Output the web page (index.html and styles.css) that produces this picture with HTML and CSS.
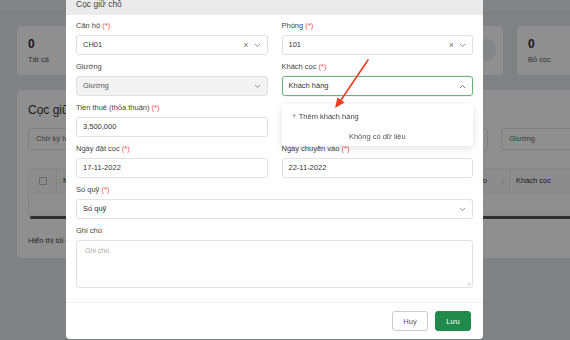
FILE: index.html
```html
<!DOCTYPE html>
<html lang="vi">
  <head>
    <meta charset="UTF-8" />
    <meta name="viewport" content="width=device-width, initial-scale=1.0" />
    <title>Cọc giữ chỗ</title>
    <link rel="stylesheet" href="styles.css">
  </head>
  <body>
    <div class="page">
      <div class="topbar"></div>
      <div class="stats">
        <div class="stat"><b>0</b><span>Tất cả</span></div>
        <div class="stat"><b>0</b><span>Chờ ký</span></div>
        <div class="stat"><b>0</b><span>Đã ký</span></div>
        <div class="stat"><b>0</b><span>Hết hạn</span><i class="dot"></i></div>
        <div class="stat"><b>0</b><span>Bỏ cọc</span></div>
      </div>
      <div class="panel">
        <h2>Cọc giữ chỗ</h2>
        <div class="filters">
          <div class="filter">Chờ ký hợp đồng</div>
          <div class="filter">Căn hộ</div>
          <div class="filter">Phòng <svg class="chev" width="7" height="5" viewBox="0 0 7 5"><path d="M1 1l2.5 2.5L6 1" fill="none" stroke="#aaa" stroke-width="0.9"/></svg></div>
          <div class="filter">Giường</div>
        </div>
        <div class="table">
          <div class="thead">
            <span class="cb"></span>
            <span class="th th-first">Mã cọc</span>
            <span class="th th-mid">Ngày chuyển vào <svg class="sort" width="4" height="7" viewBox="0 0 4 7"><path d="M0.5 2.8L2 1L3.5 2.8ZM0.5 4.2L2 6L3.5 4.2Z" fill="#d0d0d0"/></svg></span>
            <span class="th">Khách cọc</span>
          </div>
          <div class="trow"></div>
        </div>
        <div class="scrollbar"></div>
        <p class="foot">Hiển thị tối đa 10 dòng</p>
      </div>
    </div>

    <div class="overlay"></div>

    <div class="modal">
      <div class="modal-head">Cọc giữ chỗ</div>
      <div class="modal-body">
        <div class="field">
          <label>Căn hộ <span class="req">(*)</span></label>
          <div class="input">CH01<span class="icons"><span class="x">&times;</span><svg width="7" height="5" viewBox="0 0 7 5"><path d="M1 1l2.5 2.5L6 1" fill="none" stroke="#888" stroke-width="0.9"/></svg></span></div>
        </div>
        <div class="field">
          <label>Phòng <span class="req">(*)</span></label>
          <div class="input">101<span class="icons"><span class="x">&times;</span><svg width="7" height="5" viewBox="0 0 7 5"><path d="M1 1l2.5 2.5L6 1" fill="none" stroke="#888" stroke-width="0.9"/></svg></span></div>
        </div>
        <div class="field">
          <label>Giường</label>
          <div class="input disabled">Giường<span class="icons"><svg width="7" height="5" viewBox="0 0 7 5"><path d="M1 1l2.5 2.5L6 1" fill="none" stroke="#888" stroke-width="0.9"/></svg></span></div>
        </div>
        <div class="field dropdown-host">
          <label>Khách cọc <span class="req">(*)</span></label>
          <div class="input focus">Khách hàng<span class="icons"><svg width="7" height="5" viewBox="0 0 7 5"><path d="M1 4l2.5-2.5L6 4" fill="none" stroke="#666" stroke-width="0.9"/></svg></span></div>
          <div class="dropdown">
            <div class="add"><span class="plus">+</span> Thêm khách hàng</div>
            <div class="empty">Không có dữ liệu</div>
          </div>
          <svg class="arrow" width="40" height="52" viewBox="0 0 40 52">
            <path d="M35 2L6 45" stroke="#ee3b24" stroke-width="1.6" fill="none" stroke-linecap="round"/>
            <path d="M2 50L4.5 39.5L11.5 44.5Z" fill="#ee3b24"/>
          </svg>
        </div>
        <div class="field">
          <label>Tiền thuê (thỏa thuận) <span class="req">(*)</span></label>
          <div class="input">3,500,000</div>
        </div>
        <div class="field"></div>
        <div class="field">
          <label>Ngày đặt cọc <span class="req">(*)</span></label>
          <div class="input">17-11-2022</div>
        </div>
        <div class="field">
          <label>Ngày chuyển vào <span class="req">(*)</span></label>
          <div class="input">22-11-2022</div>
        </div>
        <div class="field wide">
          <label>Số quỹ <span class="req">(*)</span></label>
          <div class="input">Số quỹ<span class="icons"><svg width="7" height="5" viewBox="0 0 7 5"><path d="M1 1l2.5 2.5L6 1" fill="none" stroke="#888" stroke-width="0.9"/></svg></span></div>
        </div>
        <div class="field wide">
          <label>Ghi chú</label>
          <div class="textarea">Ghi chú
            <svg class="grip" width="5" height="5" viewBox="0 0 5 5"><path d="M1 4.5L4.5 1M3 4.5L4.5 3" stroke="#aaa" stroke-width="0.6"/></svg>
          </div>
        </div>
      </div>
      <div class="modal-foot">
        <button class="btn">Huỷ</button>
        <button class="btn primary">Lưu</button>
      </div>
    </div>
  </body>
</html>
```

FILE: styles.css
```css
body {
  margin: 0;
  width: 570px;
  height: 340px;
  overflow: hidden;
  font-family: "Liberation Sans", Arial, sans-serif;
  background: #e4e7ec;
  color: #333;
}
.page {
  padding: 0 0 0 17px;
  width: 700px;
}
.topbar {
  height: 11px;
  margin-left: -17px;
  background: #e9ebee;
}
.stats {
  display: flex;
  gap: 14px;
  margin-top: 15px;
}
.stat {
  position: relative;
  width: 111px;
  height: 49px;
  box-sizing: border-box;
  background: #fff;
  border-radius: 4px;
  padding: 11px 11px;
  display: flex;
  flex-direction: column;
}
.stat b {
  font-size: 12px;
  line-height: 14px;
  color: #2b2f3a;
}
.stat span {
  margin-top: 3px;
  font-size: 7.5px;
  line-height: 12px;
  color: #555;
}
.stat .dot {
  position: absolute;
  right: 7px;
  top: 13px;
  width: 22px;
  height: 22px;
  border-radius: 50%;
  background: #eceef1;
}
.panel {
  margin-top: 15px;
  height: 168px;
  width: 640px;
  box-sizing: border-box;
  background: #fff;
  border-radius: 4px;
  padding: 13px 11px;
}
.panel h2 {
  margin: 0;
  font-size: 12px;
  line-height: 14px;
  font-weight: normal;
  color: #333;
}
.filters {
  display: flex;
  gap: 13px;
  margin-top: 11px;
}
.filter {
  width: 148px;
  height: 22px;
  box-sizing: border-box;
  border: 1px solid #e3e3e3;
  border-radius: 3px;
  font-size: 7.5px;
  line-height: 20px;
  padding: 0 7px;
  color: #666;
  position: relative;
}
.filter .chev {
  position: absolute;
  right: 8px;
  top: 8px;
}
.table {
  margin-top: 18px;
  border: 1px solid #eee;
  border-radius: 3px;
}
.thead {
  display: flex;
  align-items: center;
  height: 24px;
  background: #fafafa;
  border-bottom: 1px solid #eee;
  font-size: 7.5px;
  color: #333;
}
.cb {
  width: 6px;
  height: 6px;
  border: 1px solid #bbb;
  border-radius: 1px;
  margin: 0 9px 0 10px;
}
.th {
  padding-left: 6px;
  line-height: 24px;
  white-space: nowrap;
}
.th-first {
  width: 360px;
  border-left: 1px solid #eee;
}
.th-mid {
  width: 80px;
  display: flex;
  align-items: center;
  border-right: 1px solid #eee;
}
.sort {
  margin-left: auto;
  margin-right: 4px;
}
.trow {
  height: 20px;
}
.scrollbar {
  height: 3px;
  margin: 1px 2px 0;
  border-radius: 2px;
  background: #555;
}
.foot {
  margin: 17px 0 0;
  font-size: 7.5px;
  color: #444;
}
.overlay {
  position: fixed;
  inset: 0;
  background: rgba(0, 0, 0, 0.44);
}
.modal {
  position: fixed;
  left: 66px;
  top: -13px;
  width: 417px;
  background: #fff;
  border-radius: 4px;
}
.modal-head {
  height: 28px;
  box-sizing: border-box;
  padding: 11px 10px 0;
  background: #ebebeb;
  border-radius: 4px 4px 0 0;
  font-size: 8.5px;
  line-height: 12px;
  color: #444;
}
.modal-body {
  display: grid;
  grid-template-columns: 1fr 1fr;
  column-gap: 14px;
  padding: 6px 10px 14px;
  border-bottom: 1px solid #f2f2f2;
}
.field {
  margin-bottom: 7px;
  position: relative;
}
.field.wide {
  grid-column: 1 / 3;
}
.field.wide:last-child {
  margin-bottom: 0;
}
.field label {
  display: block;
  font-size: 7.5px;
  line-height: 10px;
  margin-bottom: 4px;
  color: #444;
}
.req {
  color: #ef4c4c;
}
.input {
  height: 20px;
  box-sizing: border-box;
  border: 1px solid #e1e1e1;
  border-radius: 3px;
  padding: 0 6px;
  font-size: 7.5px;
  line-height: 18px;
  color: #333;
  display: flex;
  align-items: center;
}
.input.disabled {
  background: #f3f3f3;
  color: #555;
}
.input.focus {
  border-color: #68b27f;
  box-shadow: 0 0 0 1px rgba(104, 178, 127, 0.12);
}
.icons {
  margin-left: auto;
  display: flex;
  align-items: center;
  gap: 5px;
  color: #777;
}
.icons .x {
  font-size: 9px;
  line-height: 9px;
}
.textarea {
  position: relative;
  height: 48px;
  box-sizing: border-box;
  border: 1px solid #e1e1e1;
  border-radius: 3px;
  padding: 6px 8px;
  font-size: 7px;
  color: #aaa;
}
.grip {
  position: absolute;
  right: 1px;
  bottom: 1px;
}
.dropdown {
  position: absolute;
  left: 0;
  right: 0;
  top: 42px;
  height: 42px;
  background: #fff;
  border-radius: 3px;
  box-shadow: 0 2px 8px rgba(0, 0, 0, 0.12);
  z-index: 2;
  font-size: 7.5px;
  color: #444;
}
.add {
  padding: 7px 10px 0;
  line-height: 11px;
}
.plus {
  color: #888;
  font-size: 9px;
}
.empty {
  text-align: center;
  margin-top: 10px;
  line-height: 10px;
  color: #555;
}
.arrow {
  position: absolute;
  left: 51px;
  top: -4px;
  z-index: 3;
}
.modal-foot {
  display: flex;
  justify-content: flex-end;
  gap: 7px;
  padding: 8px 12px 8px;
}
.btn {
  width: 36px;
  height: 20px;
  border: 1px solid #ccc;
  border-radius: 3px;
  background: #fff;
  font-family: inherit;
  font-size: 7.5px;
  color: #555;
  padding: 0;
}
.btn.primary {
  background: #1f8a4c;
  border-color: #1f8a4c;
  color: #fff;
}
```
